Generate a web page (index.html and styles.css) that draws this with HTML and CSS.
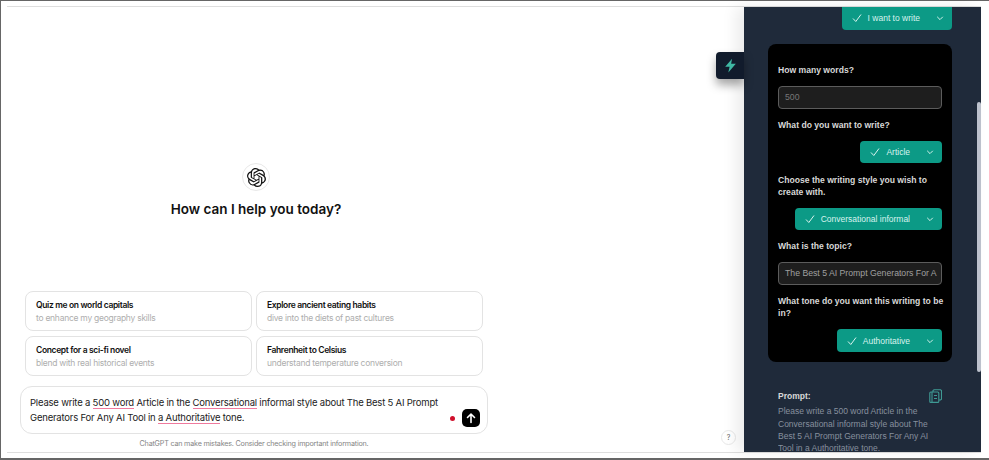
FILE: index.html
```html
<!DOCTYPE html>
<html lang="en">
<head>
    <meta charset="UTF-8">
    <title>ChatGPT</title>
    <link rel="stylesheet" href="styles.css">
</head>
<body>
    <div class="frame">
        <div class="window">
            <div class="main">
                <div class="hello">
                    <div class="logo">
                        <svg viewBox="0 0 24 24" width="19" height="19"><path fill="#111" d="M22.2819 9.8211a5.9847 5.9847 0 0 0-.5157-4.9108 6.0462 6.0462 0 0 0-6.5098-2.9A6.0651 6.0651 0 0 0 4.9807 4.1818a5.9847 5.9847 0 0 0-3.9977 2.9 6.0462 6.0462 0 0 0 .7427 7.0966 5.98 5.98 0 0 0 .511 4.9107 6.051 6.051 0 0 0 6.5146 2.9001A5.9847 5.9847 0 0 0 13.2599 24a6.0557 6.0557 0 0 0 5.7718-4.2058 5.9894 5.9894 0 0 0 3.9977-2.9001 6.0557 6.0557 0 0 0-.7475-7.0729zm-9.022 12.6081a4.4755 4.4755 0 0 1-2.8764-1.0408l.1419-.0804 4.7783-2.7582a.7948.7948 0 0 0 .3927-.6813v-6.7369l2.02 1.1686a.071.071 0 0 1 .038.052v5.5826a4.504 4.504 0 0 1-4.4945 4.4944zm-9.6607-4.1254a4.4708 4.4708 0 0 1-.5346-3.0137l.142.0852 4.783 2.7582a.7712.7712 0 0 0 .7806 0l5.8428-3.3685v2.3324a.0804.0804 0 0 1-.0332.0615L9.74 19.9502a4.4992 4.4992 0 0 1-6.1408-1.6464zM2.3408 7.8956a4.485 4.485 0 0 1 2.3655-1.9728V11.6a.7664.7664 0 0 0 .3879.6765l5.8144 3.3543-2.0201 1.1685a.0757.0757 0 0 1-.071 0l-4.8303-2.7865A4.504 4.504 0 0 1 2.3408 7.872zm16.5963 3.8558L13.1038 8.364 15.1192 7.2a.0757.0757 0 0 1 .071 0l4.8303 2.7913a4.4944 4.4944 0 0 1-.6765 8.1042v-5.6772a.79.79 0 0 0-.407-.667zm2.0107-3.0231l-.142-.0852-4.7735-2.7818a.7759.7759 0 0 0-.7854 0L9.409 9.2297V6.8974a.0662.0662 0 0 1 .0284-.0615l4.8303-2.7866a4.4992 4.4992 0 0 1 6.6802 4.66zM8.3065 12.863l-2.02-1.1638a.0804.0804 0 0 1-.038-.0567V6.0742a4.4992 4.4992 0 0 1 7.3757-3.4537l-.142.0805L8.704 5.459a.7948.7948 0 0 0-.3927.6813zm1.0976-2.3654l2.602-1.4998 2.6069 1.4998v2.9994l-2.5974 1.4997-2.6067-1.4997Z"/></svg>
                    </div>
                    <h1>How can I help you today?</h1>
                </div>
                <div class="cards">
                    <div class="card"><b>Quiz me on world capitals</b><span>to enhance my geography skills</span></div>
                    <div class="card"><b>Explore ancient eating habits</b><span>dive into the diets of past cultures</span></div>
                    <div class="card"><b>Concept for a sci-fi novel</b><span>blend with real historical events</span></div>
                    <div class="card"><b>Fahrenheit to Celsius</b><span>understand temperature conversion</span></div>
                </div>
                <div class="composer">
                    <p>Please write a <u>500 word</u> Article in the <u>Conversational</u> informal style about The Best 5 AI Prompt Generators For Any AI Tool in <u>a Authoritative</u> tone.</p>
                    <div class="send-wrap">
                        <i class="dot"></i>
                        <div class="send">
                            <svg viewBox="0 0 18 18" width="18" height="18"><path d="M9 13.5V5M5.5 8.5 9 5l3.5 3.5" fill="none" stroke="#fff" stroke-width="1.6" stroke-linecap="round" stroke-linejoin="round"/></svg>
                        </div>
                    </div>
                </div>
                <div class="note">ChatGPT can make mistakes. Consider checking important information.</div>
                <div class="help">?</div>
            </div>

            <div class="panel">
                <div class="tab">
                    <svg viewBox="0 0 24 24" width="15" height="15"><path fill="#3fb8a4" d="M14.5 1 3.5 14h7L8.5 23l12-14h-7.5z"/></svg>
                </div>
                <div class="scrollbar"></div>
                <div class="top-row">
                    <div class="drop top-drop">
                        <svg class="check" viewBox="0 0 10 10" width="10" height="10"><path d="M1 5.5 3.8 8.5 9 1.5" fill="none" stroke="#d8f3ee" stroke-width="1"/></svg>
                        <span>I want to write</span>
                        <svg class="caret" viewBox="0 0 10 10" width="8" height="8"><path d="M1.5 3.5 5 7l3.5-3.5" fill="none" stroke="#d8f3ee" stroke-width="1.2"/></svg>
                    </div>
                </div>
                <div class="form">
                    <label>How many words?</label>
                    <div class="input dim">500</div>
                    <label>What do you want to write?</label>
                    <div class="drop">
                        <svg class="check" viewBox="0 0 10 10" width="10" height="10"><path d="M1 5.5 3.8 8.5 9 1.5" fill="none" stroke="#d8f3ee" stroke-width="1"/></svg>
                        <span>Article</span>
                        <svg class="caret" viewBox="0 0 10 10" width="8" height="8"><path d="M1.5 3.5 5 7l3.5-3.5" fill="none" stroke="#d8f3ee" stroke-width="1.2"/></svg>
                    </div>
                    <label>Choose the writing style you wish to create with.</label>
                    <div class="drop">
                        <svg class="check" viewBox="0 0 10 10" width="10" height="10"><path d="M1 5.5 3.8 8.5 9 1.5" fill="none" stroke="#d8f3ee" stroke-width="1"/></svg>
                        <span>Conversational informal</span>
                        <svg class="caret" viewBox="0 0 10 10" width="8" height="8"><path d="M1.5 3.5 5 7l3.5-3.5" fill="none" stroke="#d8f3ee" stroke-width="1.2"/></svg>
                    </div>
                    <label>What is the topic?</label>
                    <div class="input">The Best 5 AI Prompt Generators For A</div>
                    <label>What tone do you want this writing to be in?</label>
                    <div class="drop">
                        <svg class="check" viewBox="0 0 10 10" width="10" height="10"><path d="M1 5.5 3.8 8.5 9 1.5" fill="none" stroke="#d8f3ee" stroke-width="1"/></svg>
                        <span>Authoritative</span>
                        <svg class="caret" viewBox="0 0 10 10" width="8" height="8"><path d="M1.5 3.5 5 7l3.5-3.5" fill="none" stroke="#d8f3ee" stroke-width="1.2"/></svg>
                    </div>
                </div>
                <div class="prompt">
                    <div class="prompt-head">
                        <b>Prompt:</b>
                        <svg viewBox="0 0 13 14" width="13" height="14"><g fill="none" stroke="#3f9a94" stroke-width="1.1"><path d="M4 3V1.5L5 .8h6.5l1 .8v8.6l-1 .8H10"/><rect x=".8" y="3" width="9" height="10.4" rx="1"/><path d="M3 3v10.4M5 6.5h3M5 9.5h3"/></g></svg>
                    </div>
                    <p>Please write a 500 word Article in the Conversational informal style about The Best 5 AI Prompt Generators For Any AI Tool in a Authoritative tone.</p>
                </div>
            </div>
        </div>
    </div>
</body>
</html>
```

FILE: styles.css
```css
* {
    margin: 0;
    padding: 0;
    box-sizing: border-box;
}
html, body {
    width: 989px;
    height: 460px;
    overflow: hidden;
    background: #fff;
}
.frame {
    height: 460px;
    border-top: 1px solid #666;
    border-left: 1px solid #666;
    border-bottom: 2px solid #666;
    padding: 5px 8px 5px 6px;
}
.window {
    display: flex;
    height: 447px;
    border-top: 1px solid #dedede;
    border-bottom: 1px solid #dedede;
}

/* chat side */
.main {
    position: relative;
    width: 737px;
    padding-left: 13px;
    font-family: Inter, "Liberation Sans", sans-serif;
    color: #111;
}
.hello {
    width: 472px;
    height: 284px;
    padding-top: 156px;
    display: flex;
    flex-direction: column;
    align-items: center;
}
.logo {
    width: 28px;
    height: 28px;
    border: 1px solid #e8e8e8;
    border-radius: 50%;
    display: flex;
    align-items: center;
    justify-content: center;
}
.hello h1 {
    margin-top: 8px;
    font-size: 13.5px;
    line-height: 20px;
    font-weight: 600;
}
.cards {
    width: 458px;
    margin-left: 5px;
    display: grid;
    grid-template-columns: 227px 227px;
    gap: 5px 4px;
}
.card {
    height: 40px;
    border: 1px solid #e3e3e3;
    border-radius: 8px;
    padding: 7px 10px;
    display: flex;
    flex-direction: column;
    font-size: 8.5px;
    line-height: 12.5px;
}
.card b {
    font-weight: 600;
    letter-spacing: -0.35px;
}
.card span {
    color: #aeaeae;
    letter-spacing: -0.26px;
}
.composer {
    width: 468px;
    height: 48px;
    margin-top: 10px;
    border: 1px solid #e3e3e3;
    border-radius: 12px;
    padding: 8px 7px 6px 9px;
    display: flex;
    justify-content: space-between;
    font-size: 9.5px;
    line-height: 15px;
    letter-spacing: -0.2px;
    color: #222;
}
.composer p {
    width: 415px;
}
.composer u {
    text-decoration: none;
    border-bottom: 1px solid #ef7a9e;
}
.send-wrap {
    display: flex;
    align-items: flex-end;
    gap: 7px;
}
.dot {
    width: 5px;
    height: 5px;
    margin-bottom: 6px;
    border-radius: 50%;
    background: #d0102c;
}
.send {
    width: 18px;
    height: 18px;
    border-radius: 5px;
    background: #000;
}
.note {
    width: 468px;
    margin-top: 5px;
    text-align: center;
    font-size: 7.2px;
    line-height: 10px;
    letter-spacing: -0.2px;
    color: #858585;
}
.help {
    position: absolute;
    left: 714px;
    bottom: 7px;
    width: 15px;
    height: 15px;
    border: 1px solid #e8e8e8;
    border-radius: 50%;
    text-align: center;
    font-size: 7px;
    line-height: 13px;
    color: #666;
}

/* extension panel */
.panel {
    position: relative;
    width: 237px;
    background: #1f2a3a;
    font-family: "Liberation Sans", Arial, sans-serif;
    box-shadow: -8px 0 14px rgba(0, 0, 0, 0.08);
    padding-left: 24px;
}
.tab {
    position: absolute;
    left: -28px;
    top: 45px;
    width: 28px;
    height: 27px;
    background: #111b2c;
    border-radius: 4px 0 0 4px;
    box-shadow: 0 6px 10px rgba(0, 0, 0, 0.35);
    display: flex;
    align-items: center;
    justify-content: center;
}
.scrollbar {
    position: absolute;
    right: 0;
    top: 95px;
    width: 4px;
    height: 270px;
    background: #bcc1cc;
    border-radius: 2px;
}
.top-row {
    width: 184px;
    display: flex;
    justify-content: flex-end;
}
.drop {
    align-self: flex-end;
    height: 22.5px;
    display: flex;
    align-items: center;
    background: #0c9a86;
    border-radius: 4px;
    padding-left: 10px;
    font-size: 8.5px;
    color: #d8f3ee;
}
.drop span {
    margin-left: 6px;
    margin-right: 9px;
}
.drop .caret {
    margin: 0 8px 0 7px;
}
.top-drop {
    border-radius: 0 0 4px 4px;
}
.form {
    width: 184px;
    margin-top: 14.5px;
    background: #000;
    border-radius: 8px;
    padding: 20px 10px 10px;
    display: flex;
    flex-direction: column;
    gap: 10.15px;
}
.form label {
    margin-right: -4px;
    font-size: 8.6px;
    line-height: 12px;
    font-weight: 700;
    color: #d8d8d8;
}
.input {
    height: 22.5px;
    background: #1e1e1e;
    border: 1px solid #5c5c5c;
    border-radius: 4px;
    padding-left: 6px;
    font-size: 8.7px;
    line-height: 20.5px;
    color: #a0a0a0;
    white-space: nowrap;
    overflow: hidden;
}
.dim {
    color: #777;
}
.prompt {
    width: 164px;
    margin: 27.5px 0 0 10px;
    font-size: 8.5px;
    line-height: 12.4px;
    height: 62px;
    overflow: hidden;
    color: #87909e;
}
.prompt p {
    width: 155px;
}
.prompt-head {
    display: flex;
    justify-content: space-between;
    height: 16px;
}
.prompt-head b {
    color: #d8d8d8;
    margin-top: 1px;
}
```
